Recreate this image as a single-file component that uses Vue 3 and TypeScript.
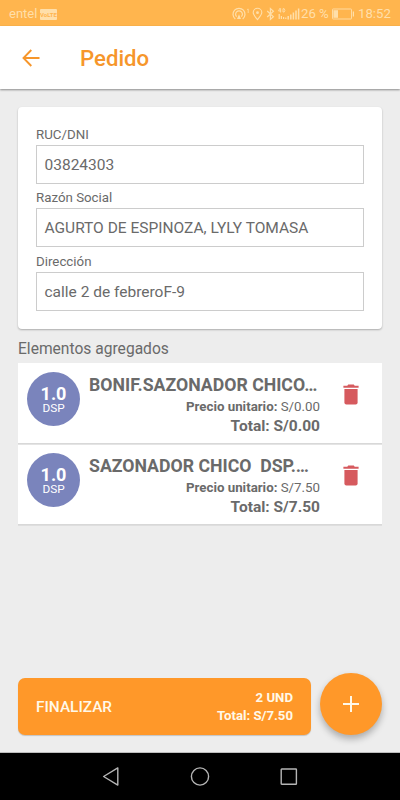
<script setup lang="ts">
interface Field {
  label: string
  value: string
}

interface OrderItem {
  quantity: string
  unit: string
  name: string
  price: string
  total: string
}

const fields: Field[] = [
  { label: 'RUC/DNI', value: '03824303' },
  { label: 'Razón Social', value: 'AGURTO DE ESPINOZA, LYLY TOMASA' },
  { label: 'Dirección', value: 'calle 2 de febreroF-9' },
]

const items: OrderItem[] = [
  { quantity: '1.0', unit: 'DSP', name: 'BONIF.SAZONADOR CHICO…', price: 'S/0.00', total: 'S/0.00' },
  { quantity: '1.0', unit: 'DSP', name: 'SAZONADOR CHICO  DSP.…', price: 'S/7.50', total: 'S/7.50' },
]
</script>

<template>
  <div class="screen">
    <div class="status">
      <span class="carrier">entel</span>
      <span class="volte">VoLTE</span>
      <svg class="status-icons" width="68" height="16" viewBox="0 0 68 16" fill="none" stroke="currentColor">
        <path d="M3.3 13A6 6 0 1 1 10.7 13M4.6 10.7A3.4 3.4 0 1 1 9.4 10.7" stroke-width="1.2" />
        <path d="M7 8.2L9 13H5Z" fill="currentColor" stroke="none" />
        <path d="M15.1 3.6L16.2 3V7" stroke-width=".8" />
        <path d="M25.5 13.6C23.2 10.9 21.2 8.7 21.2 6.6a4.3 4.3 0 0 1 8.6 0C29.8 8.7 27.8 10.9 25.5 13.6Z" stroke-width="1.1" />
        <circle cx="25.5" cy="6.7" r="1.4" fill="currentColor" stroke="none" />
        <path d="M35.2 5L41.4 10.7L38.4 13.4V2.6L41.4 5.3L35.2 11" stroke-width="1.2" />
        <path d="M47.8 2.2L46.6 5H49.2M48.6 2.2V6.5M51 2.7H52.2Q53.6 4.4 52.2 6H51Z" stroke-width=".9" />
        <path d="M47.2 8V13M49.4 10V13M51.6 11V13M53.8 11.5V13" stroke-width="1.2" />
        <path d="M56.2 10V13.5M58.8 8.4V13.5M61.4 6.5V13.5M64 4.6V13.5M66.6 2.5V13.5" stroke-width="1.5" />
      </svg>
      <span class="percent">26 %</span>
      <svg class="battery" width="23" height="12" viewBox="0 0 23 12" fill="none" stroke="currentColor">
        <rect x=".5" y="1" width="19" height="10" rx=".6" stroke-width=".9" />
        <path d="M1.4 2.2H6V9.8H1.4Z" fill="currentColor" stroke="none" />
        <path d="M21.4 3.5V8.5" stroke-width="1.2" />
      </svg>
      <span class="clock">18:52</span>
    </div>

    <header class="appbar">
      <svg class="back" width="18" height="18" viewBox="0 0 18 18" fill="none" stroke="currentColor" stroke-width="1.9">
        <path d="M9.3 1L1.5 9L9.3 17M1.5 9H17.5" />
      </svg>
      <h1>Pedido</h1>
    </header>

    <main class="content">
      <section class="card">
        <div v-for="field in fields" :key="field.label" class="field">
          <span class="label">{{ field.label }}</span>
          <div class="box">{{ field.value }}</div>
        </div>
      </section>

      <h2>Elementos agregados</h2>

      <ul class="items">
        <li v-for="item in items" :key="item.name" class="item">
          <div class="badge">
            <strong>{{ item.quantity }}</strong>
            <span>{{ item.unit }}</span>
          </div>
          <div class="detail">
            <div class="name">{{ item.name }}</div>
            <div class="price"><b>Precio unitario:</b> {{ item.price }}</div>
            <div class="total">Total: {{ item.total }}</div>
          </div>
          <svg class="trash" width="16" height="21" viewBox="0 0 16 21" fill="currentColor">
            <path d="M.4 1.7H4.3L5.2.6H10.8L11.7 1.7H15.6V3.7H.4Z" />
            <path d="M1.4 5H14.6V18.4Q14.6 20.4 12.6 20.4H3.4Q1.4 20.4 1.4 18.4Z" />
          </svg>
        </li>
      </ul>
    </main>

    <footer class="actions">
      <button class="finish" type="button">
        <span class="finish-label">FINALIZAR</span>
        <span class="summary">
          <span>2 UND</span>
          <span>Total: S/7.50</span>
        </span>
      </button>
      <button class="add" type="button" aria-label="Agregar">
        <svg width="16" height="16" viewBox="0 0 16 16" fill="none" stroke="currentColor" stroke-width="2">
          <path d="M8 0V16M0 8H16" />
        </svg>
      </button>
    </footer>

    <nav class="navbar">
      <svg width="18" height="20" viewBox="0 0 18 20" fill="none" stroke="currentColor" stroke-width="1.4" stroke-linejoin="round">
        <path d="M1.6 9.5L15.8 .9V18.1Z" />
      </svg>
      <svg width="20" height="20" viewBox="0 0 20 20" fill="none" stroke="currentColor" stroke-width="1.4">
        <circle cx="10" cy="9.5" r="8.6" />
      </svg>
      <svg width="18" height="18" viewBox="0 0 18 18" fill="none" stroke="currentColor" stroke-width="1.4">
        <rect x="1.2" y="1" width="15.2" height="15.2" rx=".5" />
      </svg>
    </nav>
  </div>
</template>

<style>
body {
  margin: 0;
}
</style>

<style scoped>
.screen {
  display: flex;
  flex-direction: column;
  width: 400px;
  height: 800px;
  overflow: hidden;
  background: #ededed;
  color: #6a6a6a;
  font-family: Roboto, 'Liberation Sans', sans-serif;
}

.status {
  display: flex;
  align-items: center;
  flex: none;
  box-sizing: border-box;
  height: 26px;
  padding: 2px 9px 0;
  background: #ffb54e;
  color: #ffdfaa;
  font-size: 13.2px;
  line-height: 24px;
  white-space: nowrap;
}

.carrier {
  width: 28px;
  font-size: 13px;
}

.volte {
  width: 17px;
  height: 11px;
  margin-left: 3px;
  border-radius: 1px;
  background: #ffdfaa;
  color: #ffb54e;
  font-size: 6px;
  font-weight: 700;
  line-height: 11px;
  text-align: center;
}

.status-icons {
  flex: none;
  margin-left: 175px;
}

.percent {
  width: 27px;
  margin-left: 1px;
}

.battery {
  flex: none;
  margin-left: 4px;
}

.clock {
  margin-left: 3px;
}

.appbar {
  display: flex;
  align-items: center;
  flex: none;
  box-sizing: border-box;
  height: 63px;
  padding: 1px 22px 0;
  background: #fff;
  box-shadow: 0 1px 2px rgba(0, 0, 0, 0.42);
  color: #f6962b;
}

h1 {
  margin: 0 0 0 40px;
  font-size: 22.2px;
  font-weight: 500;
  line-height: 30px;
}

.content {
  flex: 1;
  padding: 18px 18px 0;
}

.card {
  display: flex;
  flex-direction: column;
  gap: 4px;
  box-sizing: border-box;
  height: 222px;
  padding: 18px;
  border-radius: 4px;
  background: #fff;
  box-shadow: 0 1px 2px rgba(0, 0, 0, 0.28);
}

.field {
  height: 59.6px;
}

.label {
  display: block;
  height: 20px;
  font-size: 13.3px;
  line-height: 19px;
}

.box {
  box-sizing: border-box;
  height: 39px;
  padding: 0 7.5px;
  border: 1px solid #ccc;
  font-size: 15.5px;
  line-height: 39px;
  white-space: nowrap;
}

h2 {
  margin: 10px 0 4px;
  font-size: 15.6px;
  font-weight: 400;
  line-height: 20px;
}

.items {
  margin: 0;
  padding: 0;
  list-style: none;
}

.item {
  display: flex;
  box-sizing: border-box;
  height: 81px;
  padding: 9px 23px 0 9px;
  border-bottom: 1px solid #d8d8d8;
  background: #fff;
}

.item + .item {
  box-shadow: inset 0 1px #e4e4e4, 0 1px #dedede;
}

.badge {
  display: flex;
  flex: none;
  flex-direction: column;
  align-items: center;
  box-sizing: border-box;
  width: 53px;
  height: 54px;
  padding-top: 13px;
  border-radius: 50%;
  background: #7a84bc;
  color: #fff;
}

.badge strong {
  font-size: 18px;
  line-height: 17px;
}

.badge span {
  font-size: 11.8px;
  line-height: 12px;
}

.detail {
  flex: none;
  width: 231px;
  margin-left: 9px;
  text-align: right;
}

.name {
  height: 26px;
  font-size: 17.7px;
  font-weight: 700;
  line-height: 26px;
  text-align: left;
  white-space: pre;
}

.price {
  height: 17px;
  font-size: 13.3px;
  line-height: 17px;
}

.price b {
  font-weight: 700;
}

.total {
  font-size: 15.5px;
  font-weight: 700;
  line-height: 22px;
}

.trash {
  flex: none;
  margin: 12px 0 0 auto;
  color: #d65a5e;
}

.actions {
  display: flex;
  align-items: flex-end;
  justify-content: space-between;
  flex: none;
  padding: 0 18px 17px;
  border-bottom: 1px solid #bdbdbd;
}

button {
  border: 0;
  background: #ff9829;
  color: #fff8e8;
  font-family: inherit;
}

.finish {
  display: flex;
  align-items: center;
  justify-content: space-between;
  width: 293px;
  height: 57px;
  padding: 0 18px;
  border-radius: 7px;
  box-shadow: 0 1px 1px rgba(0, 0, 0, 0.18);
}

.finish-label {
  font-size: 15.4px;
  font-weight: 500;
}

.summary {
  display: flex;
  flex-direction: column;
  font-size: 13.2px;
  font-weight: 700;
  line-height: 18px;
  text-align: right;
}

.add {
  display: grid;
  place-items: center;
  width: 62px;
  height: 62px;
  padding: 0;
  border-radius: 50%;
  box-shadow: 0 4px 7px rgba(0, 0, 0, 0.28);
}

.navbar {
  display: flex;
  align-items: center;
  justify-content: center;
  gap: 70px;
  flex: none;
  box-sizing: border-box;
  height: 47px;
  background: #000;
  color: #b5b5b5;
}
</style>
